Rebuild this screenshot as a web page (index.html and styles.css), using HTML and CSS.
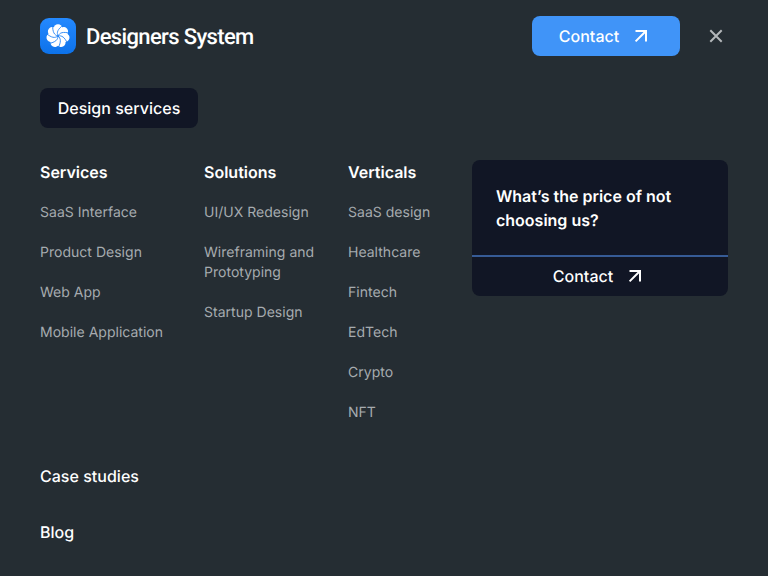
FILE: index.html
```html
<!DOCTYPE html>
<html lang="en">
<head>
<meta charset="utf-8">
<title>Designers System</title>
<link rel="stylesheet" href="styles.css">
</head>
<body>
<svg class="defs" aria-hidden="true">
  <symbol id="arrow" viewBox="0 0 14 14"><path d="M1.5 2H12V12.5M12 2L1.6 12.4" fill="none" stroke="currentColor" stroke-width="2"/></symbol>
</svg>
<header class="header">
  <a class="brand">
    <svg class="logo" viewBox="-18 -18 36 36">
      <defs>
        <linearGradient id="logo-bg" x1="0" y1="0" x2="0" y2="1"><stop offset="0" stop-color="#2489ff"/><stop offset="1" stop-color="#0d72ea"/></linearGradient>
        <circle id="petal" cx="0" cy="-7.3" r="4.4"/>
        <path id="vein" d="M0 0C-1.6 -3.6 -.4 -6.6 5.2 -11"/>
      </defs>
      <rect x="-18" y="-18" width="36" height="36" rx="9" fill="url(#logo-bg)"/>
      <g fill="#fff">
        <circle r="8"/>
        <use href="#petal"/><use href="#petal" transform="rotate(51.43)"/><use href="#petal" transform="rotate(102.86)"/><use href="#petal" transform="rotate(154.29)"/><use href="#petal" transform="rotate(205.71)"/><use href="#petal" transform="rotate(257.14)"/><use href="#petal" transform="rotate(308.57)"/>
      </g>
      <g fill="none" stroke="#1b7ff5" stroke-width=".8">
        <use href="#vein"/><use href="#vein" transform="rotate(51.43)"/><use href="#vein" transform="rotate(102.86)"/><use href="#vein" transform="rotate(154.29)"/><use href="#vein" transform="rotate(205.71)"/><use href="#vein" transform="rotate(257.14)"/><use href="#vein" transform="rotate(308.57)"/>
      </g>
    </svg>
    <span class="brand-name">Designers System</span>
  </a>
  <a class="contact">Contact <svg class="arrow"><use href="#arrow"/></svg></a>
  <svg class="close" viewBox="0 0 14 14"><path d="M1.3 1.3L12.7 12.7M12.7 1.3L1.3 12.7"/></svg>
</header>
<main>
  <a class="tab">Design services</a>
  <div class="menu">
    <section>
      <h2>Services</h2>
      <ul><li>SaaS Interface</li><li>Product Design</li><li>Web App</li><li>Mobile Application</li></ul>
    </section>
    <section>
      <h2>Solutions</h2>
      <ul><li>UI/UX Redesign</li><li>Wireframing and<br>Prototyping</li><li>Startup Design</li></ul>
    </section>
    <section>
      <h2>Verticals</h2>
      <ul><li>SaaS design</li><li>Healthcare</li><li>Fintech</li><li>EdTech</li><li>Crypto</li><li>NFT</li></ul>
    </section>
    <aside class="card">
      <p>What’s the price of not choosing us?</p>
      <a class="card-contact">Contact <svg class="arrow"><use href="#arrow"/></svg></a>
    </aside>
  </div>
  <nav class="links"><a>Case studies</a><a>Blog</a></nav>
</main>
</body>
</html>
```
FILE: styles.css
```css
* { box-sizing: border-box; }
body {
  margin: 0;
  height: 576px;
  padding: 16px 40px 0;
  overflow: hidden;
  background: #252d33;
  color: #fff;
  font: 450 16px/24px Inter, sans-serif;
  letter-spacing: .02px;
  text-rendering: geometricPrecision;
}
h2, p, ul { margin: 0; padding: 0; }
ul { list-style: none; }
.defs { display: none; }
.header { display: flex; align-items: center; height: 40px; }
.brand { display: flex; align-items: center; gap: 10px; margin-right: auto; }
.logo { display: block; width: 36px; height: 36px; }
.brand-name { padding-top: 3px; font: 500 22px/28px Roboto, sans-serif; letter-spacing: -.64px; white-space: nowrap; }
.contact, .card-contact { display: flex; align-items: center; justify-content: center; gap: 15px; padding-right: 5px; }
.contact { width: 148px; height: 40px; border-radius: 8px; background: #4094f8; }
.arrow { width: 14px; height: 14px; }
.close { width: 14px; height: 14px; margin: 0 5px 0 29px; fill: none; stroke: #b3b7ba; stroke-width: 2; }
.tab {
  display: flex;
  align-items: center;
  justify-content: center;
  width: 158px;
  height: 40px;
  margin-top: 32px;
  border-radius: 8px;
  background: #111625;
}
.menu { display: grid; grid-template-columns: 164px 144px 124px 256px; align-items: start; height: 304px; margin-top: 32px; }
h2 { font: 600 16px/24px Inter, sans-serif; letter-spacing: 0; }
ul { display: grid; gap: 20px; margin-top: 19px; }
li { color: #a6abaf; font-size: 14px; font-weight: 380; line-height: 20px; letter-spacing: .02px; white-space: nowrap; }
.card { height: 136px; overflow: hidden; border-radius: 8px; background: #111625; }
.card p { height: 95px; padding: 24px; font-weight: 600; letter-spacing: 0; }
.card-contact { height: 41px; padding-bottom: 1px; border-top: 2px solid #365b96; }
.links { display: grid; gap: 32px; }
```
